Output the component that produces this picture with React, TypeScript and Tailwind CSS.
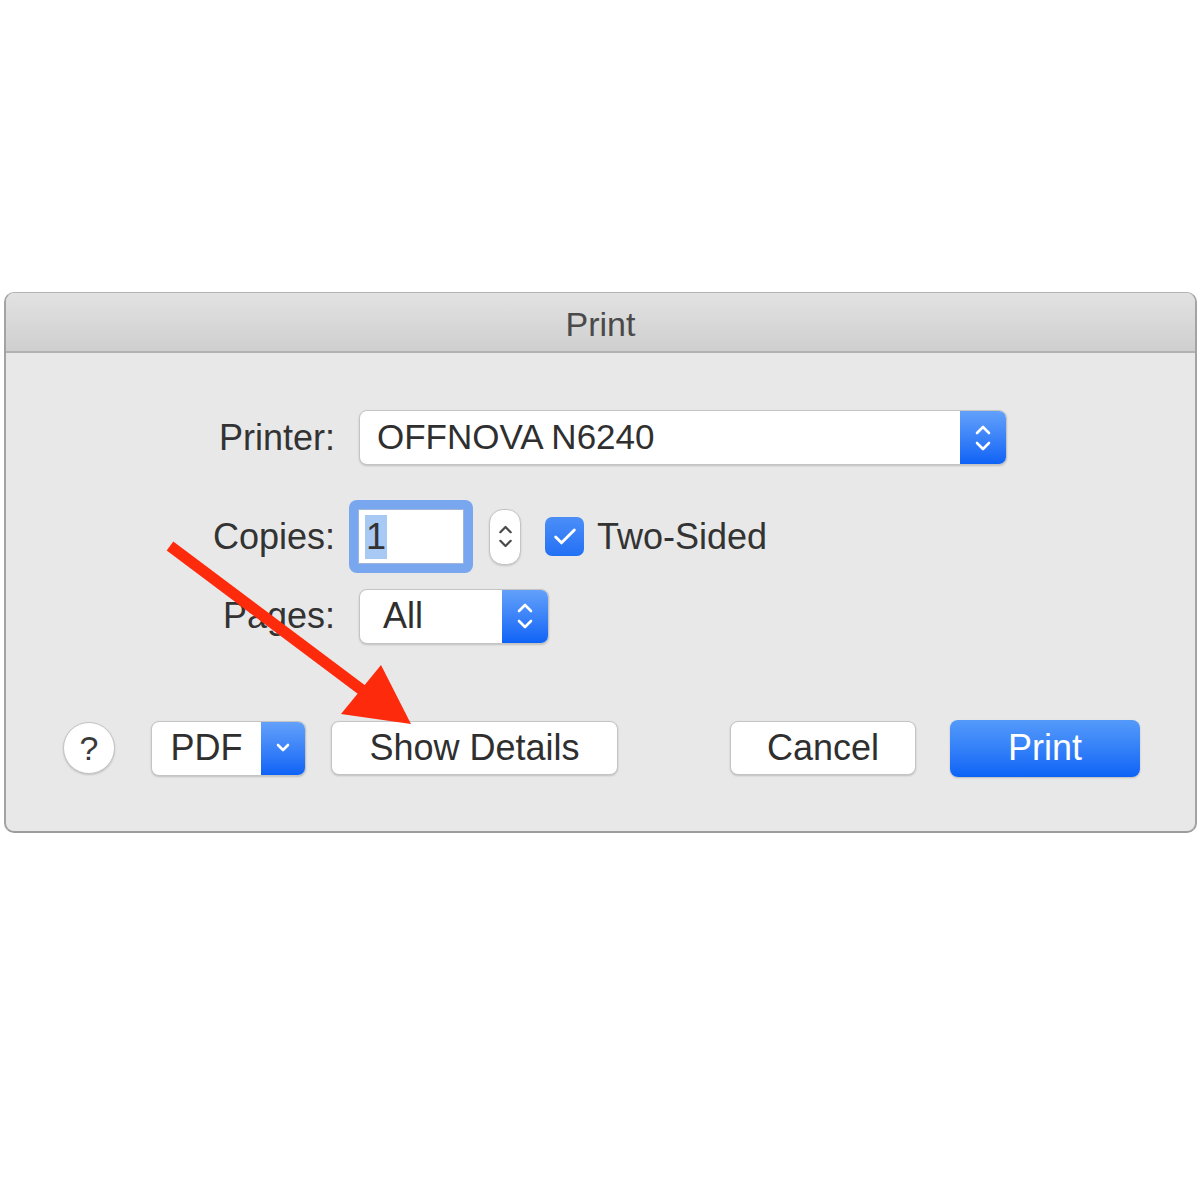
import { Check } from "lucide-react";

const font = { fontFamily: '"Liberation Sans", Arial, sans-serif' };

function UpDown({ color = "white", size = 22 }: { color?: string; size?: number }) {
  return (
    <svg width={size} height={size + 10} viewBox="0 0 22 32" fill="none">
      <path d="M5 11 L11 5 L17 11" stroke={color} strokeWidth="2.6" strokeLinecap="round" strokeLinejoin="round" />
      <path d="M5 21 L11 27 L17 21" stroke={color} strokeWidth="2.6" strokeLinecap="round" strokeLinejoin="round" />
    </svg>
  );
}

function PopupButton({ value, width, textClass }: { value: string; width: string; textClass?: string }) {
  return (
    <div className={`flex h-[55px] ${width} rounded-[8px] border border-[#c4c4c4] bg-white shadow-[0_1px_2px_rgba(0,0,0,0.18)] overflow-hidden`}>
      <div className={`flex-1 flex items-center text-[#2f2f2f] ${textClass ?? "text-[36px] pl-[18px]"}`}>{value}</div>
      <div className="w-[46px] flex items-center justify-center bg-gradient-to-b from-[#62a0fa] to-[#0c62f6]">
        <UpDown />
      </div>
    </div>
  );
}

export default function App() {
  return (
    <div className="relative w-[1200px] h-[1200px] bg-white pt-[292px] overflow-hidden" style={font}>
      <div className="ml-[4px] w-[1193px] h-[541px] rounded-[10px] border-x-[2px] border-t border-b-[2px] border-x-[#a3a3a3] border-t-[#b3b3b3] border-b-[#9c9c9c] bg-[#e8e8e8] overflow-hidden">
        {/* title bar */}
        <div className="h-[60px] bg-gradient-to-b from-[#e2e2e2] to-[#cfcfcf] border-b-[2px] border-[#b2b2b2] flex items-center justify-center">
          <span className="text-[34px] text-[#4a4a4a] pt-[4px]">Print</span>
        </div>

        <div className="pt-[57px] text-[#333333]">
          <div className="flex items-center h-[55px]">
            <div className="w-[329px] text-right text-[36px]">Printer:</div>
            <div className="ml-[24px]">
              <PopupButton value="OFFNOVA N6240" width="w-[648px]" textClass="text-[35px] pl-[17px]" />
            </div>
          </div>

          <div className="flex items-center h-[73px] mt-[35px]">
            <div className="w-[329px] text-right text-[36px]">Copies:</div>
            <div className="ml-[14px] w-[124px] h-[73px] rounded-[8px] bg-[#78a6ef] p-[9px]">
              <div className="w-full h-full bg-white border border-[#9fb5d8] flex items-center pl-[6px]">
                <span className="bg-[#a9c9f5] text-[36px] leading-[44px] px-[1px]">1</span>
              </div>
            </div>
            <div className="ml-[16px] w-[32px] h-[56px] rounded-[14px] bg-white border border-[#c4c4c4] shadow-[0_1px_2px_rgba(0,0,0,0.15)] flex items-center justify-center">
              <UpDown color="#4a4a4a" size={19} />
            </div>
            <div className="ml-[24px] w-[39px] h-[39px] rounded-[7px] bg-gradient-to-b from-[#4b8ef8] to-[#2270f4] flex items-center justify-center">
              <Check className="w-[28px] h-[28px] text-white" strokeWidth={2.5} />
            </div>
            <div className="ml-[13px] text-[36px]">Two-Sided</div>
          </div>

          <div className="flex items-center h-[54px] mt-[16px]">
            <div className="w-[329px] text-right text-[36px]">Pages:</div>
            <div className="ml-[24px]">
              <PopupButton value="All" width="w-[190px]" textClass="text-[36px] pl-[23px]" />
            </div>
          </div>

          <div className="flex items-center h-[58px] mt-[76px]">
            <div className="ml-[57px] w-[52px] h-[52px] rounded-full bg-white border border-[#c4c4c4] shadow-[0_1px_2px_rgba(0,0,0,0.18)] flex items-center justify-center text-[34px] text-[#3a3a3a]">
              ?
            </div>
            <div className="ml-[36px] flex h-[55px] w-[155px] rounded-[8px] border border-[#c4c4c4] bg-white shadow-[0_1px_2px_rgba(0,0,0,0.18)] overflow-hidden">
              <div className="flex-1 flex items-center justify-center text-[36px] text-[#2f2f2f]">PDF</div>
              <div className="w-[44px] flex items-center justify-center bg-gradient-to-b from-[#62a0fa] to-[#0c62f6]">
                <svg width="20" height="14" viewBox="0 0 20 14" fill="none">
                  <path d="M5 4 L10 9 L15 4" stroke="white" strokeWidth="2.6" strokeLinecap="round" strokeLinejoin="round" />
                </svg>
              </div>
            </div>
            <div className="ml-[25px] h-[54px] w-[287px] rounded-[8px] border border-[#c4c4c4] bg-white shadow-[0_1px_2px_rgba(0,0,0,0.18)] flex items-center justify-center text-[36px] text-[#2f2f2f]">
              Show Details
            </div>
            <div className="ml-[112px] h-[54px] w-[186px] rounded-[8px] border border-[#c4c4c4] bg-white shadow-[0_1px_2px_rgba(0,0,0,0.18)] flex items-center justify-center text-[36px] text-[#2f2f2f]">
              Cancel
            </div>
            <div className="ml-[34px] h-[57px] w-[190px] rounded-[8px] bg-gradient-to-b from-[#549afa] to-[#0b63f6] shadow-[0_1px_2px_rgba(0,0,0,0.2)] flex items-center justify-center text-[36px] text-white">
              Print
            </div>
          </div>
        </div>
      </div>

      {/* red annotation arrow */}
      <svg className="absolute left-0 top-0 pointer-events-none" width="1200" height="1200" viewBox="0 0 1200 1200">
        <line x1="170" y1="546" x2="366" y2="693" stroke="#fe2a0c" strokeWidth="11" />
        <polygon points="341,714 381,665 411,724" fill="#fe2a0c" />
      </svg>
    </div>
  );
}
